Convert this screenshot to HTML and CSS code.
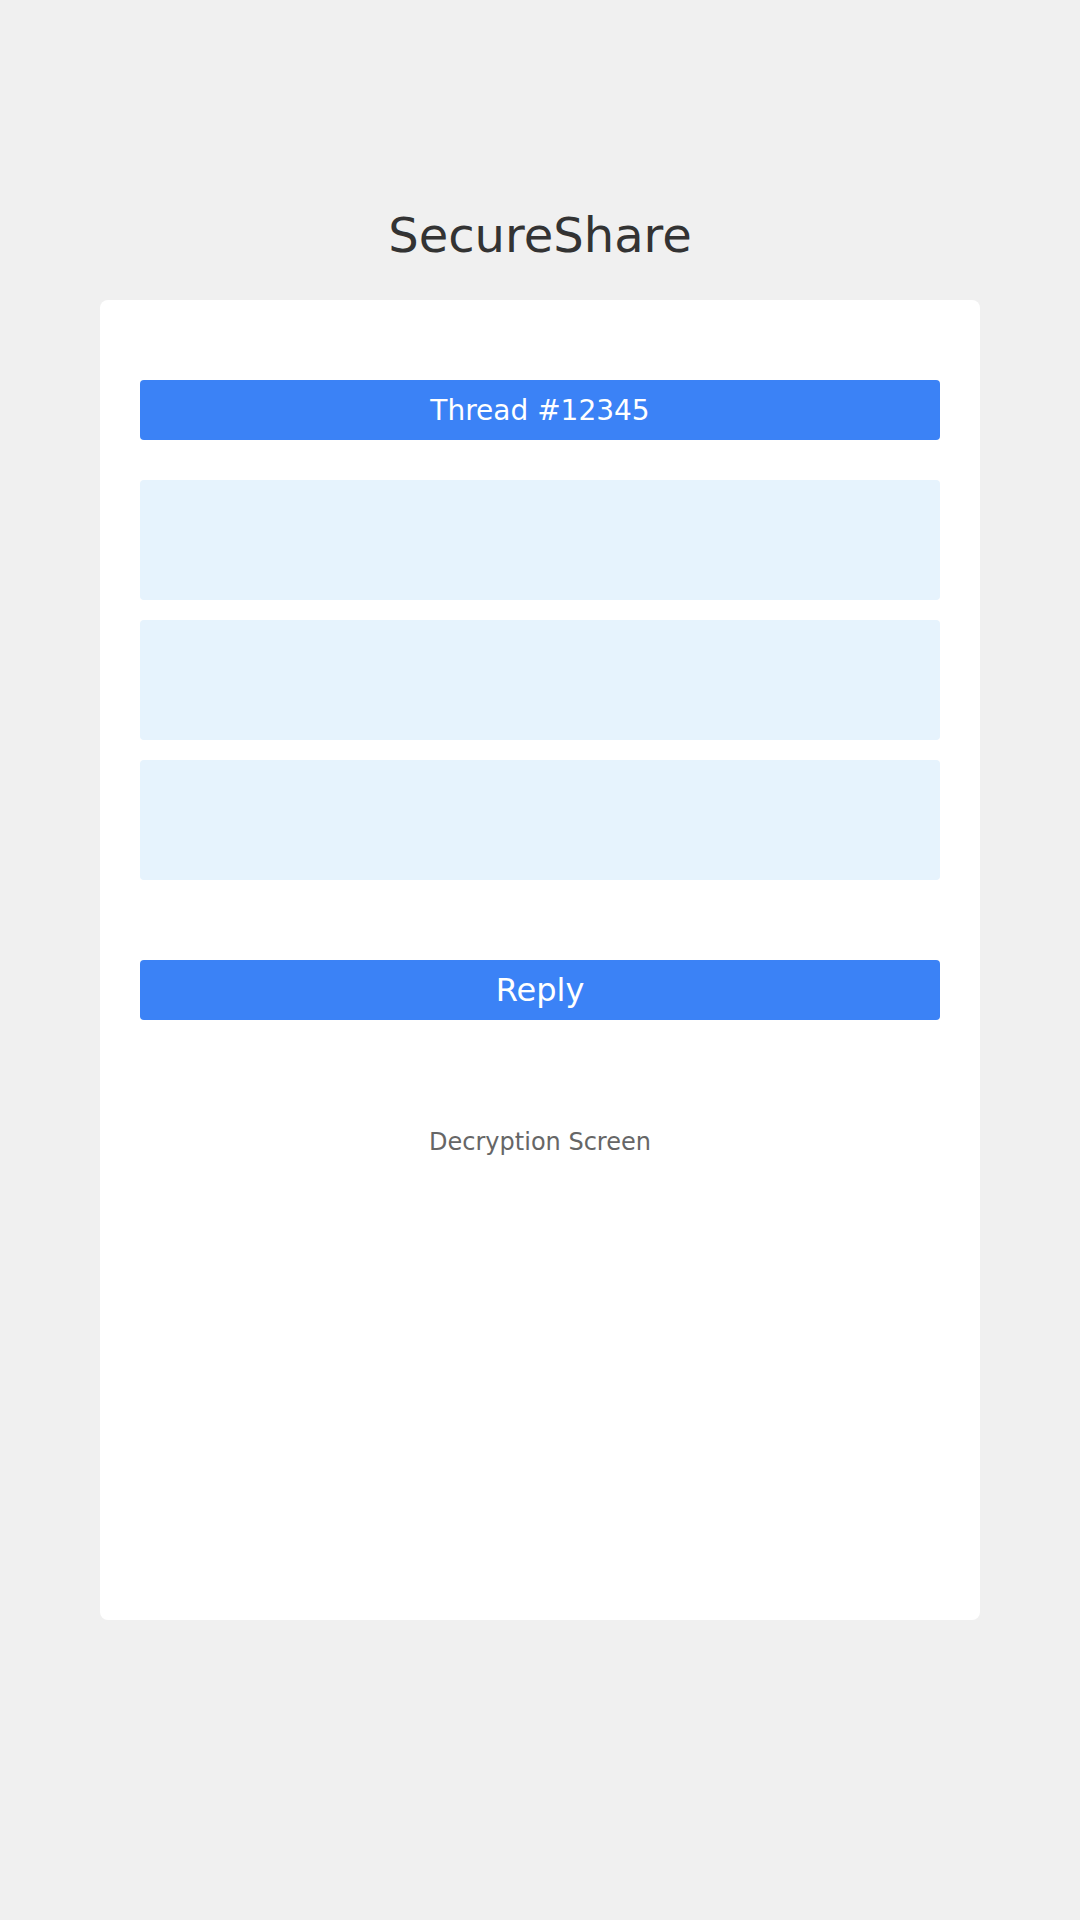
FILE: index.html
```html
<!DOCTYPE html>
<html lang="en">
<head>
<meta charset="utf-8">
<title>SecureShare</title>
<link rel="stylesheet" href="styles.css">
</head>
<body>
  <main class="page">
    <h1 class="title">SecureShare</h1>
    <section class="card">
      <div class="thread-header">Thread #12345</div>
      <div class="messages">
        <div class="message"></div>
        <div class="message"></div>
        <div class="message"></div>
      </div>
      <button class="reply-btn" type="button">Reply</button>
      <p class="caption">Decryption Screen</p>
    </section>
  </main>
</body>
</html>
```

FILE: styles.css
```css
* { box-sizing: border-box; }

html, body {
  margin: 0;
  padding: 0;
  background: #f0f0f0;
  font-family: "DejaVu Sans", Verdana, sans-serif;
}

.page {
  padding-top: 207px;
  display: flex;
  flex-direction: column;
  align-items: center;
}

.title {
  margin: 0 0 37px;
  font-size: 48px;
  line-height: 56px;
  font-weight: normal;
  color: #333333;
}

.card {
  width: 880px;
  height: 1320px;
  background: #ffffff;
  border-radius: 8px;
  padding: 80px 40px;
  display: flex;
  flex-direction: column;
}

.thread-header {
  height: 60px;
  background: #3b82f6;
  color: #ffffff;
  border-radius: 4px;
  font-size: 28px;
  display: flex;
  align-items: center;
  justify-content: center;
}

.messages {
  margin-top: 40px;
  display: flex;
  flex-direction: column;
  gap: 20px;
}

.message {
  height: 120px;
  background: #e6f3fd;
  border-radius: 4px;
}

.reply-btn {
  margin-top: 80px;
  height: 60px;
  border: none;
  border-radius: 4px;
  background: #3b82f6;
  color: #ffffff;
  font-family: inherit;
  font-size: 32px;
  padding: 0;
}

.caption {
  margin: 108px 0 0;
  text-align: center;
  font-size: 24px;
  line-height: 28px;
  color: #666666;
}
```
